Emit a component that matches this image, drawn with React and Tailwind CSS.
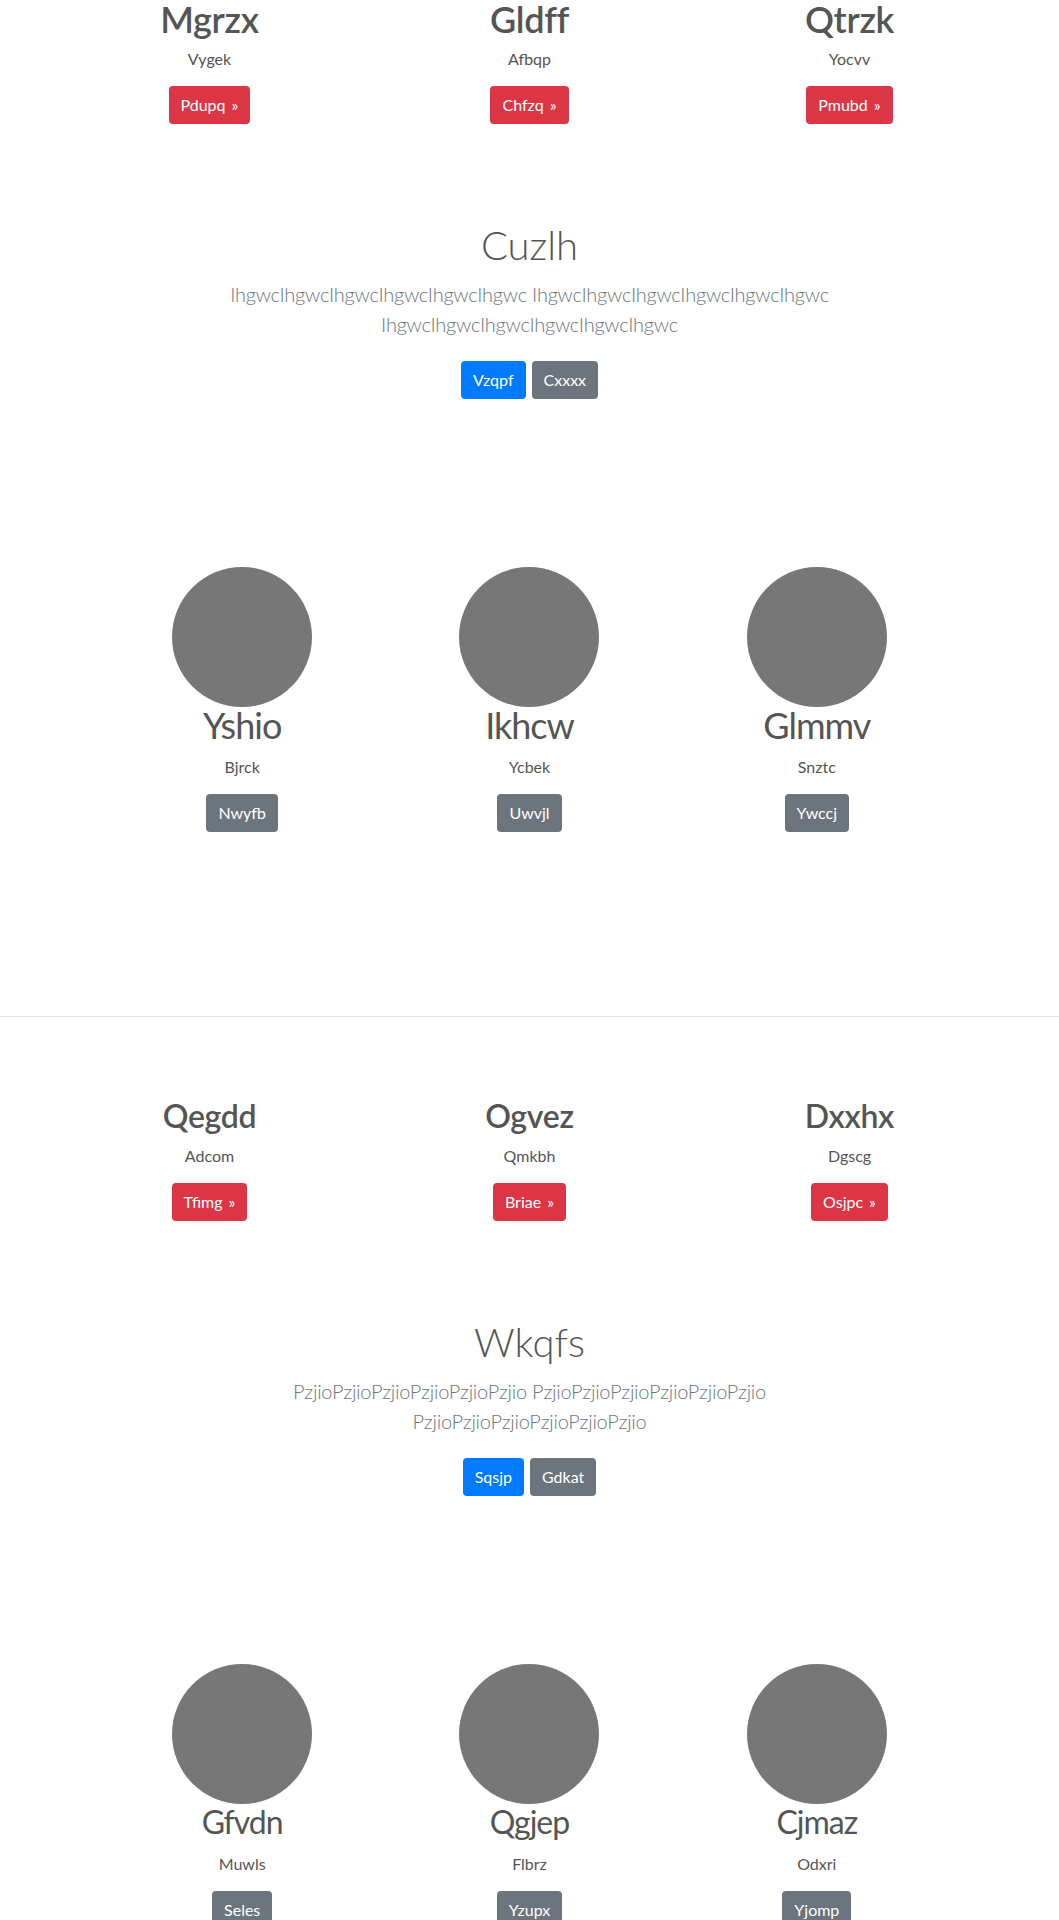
import React from 'react';

const blocks = [
  {
    size: 'text-[36px]',
    features: [
      { title: 'Mgrzx', text: 'Vygek', cta: 'Pdupq' },
      { title: 'Gldff', text: 'Afbqp', cta: 'Chfzq' },
      { title: 'Qtrzk', text: 'Yocvv', cta: 'Pmubd' },
    ],
    hero: { title: 'Cuzlh', word: 'Ihgwc', primary: 'Vzqpf', secondary: 'Cxxxx' },
    people: [
      { name: 'Yshio', role: 'Bjrck', cta: 'Nwyfb' },
      { name: 'Ikhcw', role: 'Ycbek', cta: 'Uwvjl' },
      { name: 'Glmmv', role: 'Snztc', cta: 'Ywccj' },
    ],
  },
  {
    size: 'text-[32px]',
    features: [
      { title: 'Qegdd', text: 'Adcom', cta: 'Tfimg' },
      { title: 'Ogvez', text: 'Qmkbh', cta: 'Briae' },
      { title: 'Dxxhx', text: 'Dgscg', cta: 'Osjpc' },
    ],
    hero: { title: 'Wkqfs', word: 'Pzjio', primary: 'Sqsjp', secondary: 'Gdkat' },
    people: [
      { name: 'Gfvdn', role: 'Muwls', cta: 'Seles' },
      { name: 'Qgjep', role: 'Flbrz', cta: 'Yzupx' },
      { name: 'Cjmaz', role: 'Odxri', cta: 'Yjomp' },
    ],
  },
];

function Btn({ color, children }) {
  return (
    <span className={`inline-flex h-[38px] items-center rounded-[4px] px-3 text-[16px] text-white ${color}`}>
      {children}
    </span>
  );
}

function Block({ block }) {
  const words = Array(3).fill(block.hero.word.repeat(6));
  return (
    <section>
      {/* feature row */}
      <div className="mx-auto grid w-[960px] grid-cols-3 text-center">
        {block.features.map((f) => (
          <div key={f.title} className="flex flex-col items-center">
            <h2 className={`${block.size} font-semibold leading-[38px] tracking-[-0.3px] text-[#555]`}>{f.title}</h2>
            <p className="mt-[9px] text-[16px] leading-[24px] text-[#555]">{f.text}</p>
            <div className="mt-[15px]">
              <Btn color="bg-[#dc3545]">
                {f.cta}
                <span className="ml-[6px]">»</span>
              </Btn>
            </div>
          </div>
        ))}
      </div>

      {/* hero */}
      <div className="mt-[97px] flex flex-col items-center text-center">
        <h1 className="text-[40px] font-light leading-[48px] text-[#555]">{block.hero.title}</h1>
        <p className="mt-[10px] max-w-[700px] text-[20px] font-light leading-[30px] tracking-[-0.25px] text-[#6c757d]">
          {words.join(' ')}
        </p>
        <div className="mt-[22px] flex gap-[6px]">
          <Btn color="bg-[#007bff]">{block.hero.primary}</Btn>
          <Btn color="bg-[#6c757d]">{block.hero.secondary}</Btn>
        </div>
      </div>

      {/* people row */}
      <div className="mx-auto mt-[168px] grid w-[862px] grid-cols-3 text-center">
        {block.people.map((p) => (
          <div key={p.name} className="flex flex-col items-center">
            <div className="h-[140px] w-[140px] rounded-full bg-[#777]" />
            <h2 className={`${block.size} leading-[36px] tracking-[-1px] text-[#555]`}>{p.name}</h2>
            <p className="mt-[12px] text-[16px] leading-[24px] text-[#555]">{p.role}</p>
            <div className="mt-[15px]">
              <Btn color="bg-[#6c757d]">{p.cta}</Btn>
            </div>
          </div>
        ))}
      </div>

      <hr className="mt-[184px] mb-[80px] border-0 border-t border-[#e5e5e5]" />
    </section>
  );
}

export default function App() {
  return (
    <div className="h-[1920px] overflow-hidden bg-white" style={{ fontFamily: 'Lato, "Open Sans", sans-serif' }}>
      {blocks.map((b, i) => (
        <Block key={i} block={b} />
      ))}
    </div>
  );
}
